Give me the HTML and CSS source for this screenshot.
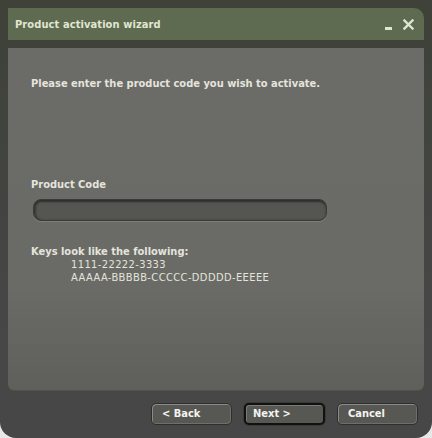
FILE: index.html
```html
<!DOCTYPE html>
<html lang="en">
<head>
    <meta charset="UTF-8">
    <title>Product activation wizard</title>
    <link rel="stylesheet" href="styles.css">
</head>
<body>
    <div class="window">
        <header class="titlebar">
            <h1>Product activation wizard</h1>
            <div class="controls">
                <span class="min"></span>
                <svg class="close" width="11" height="11" viewBox="0 0 11 11">
                    <path d="M1.5 1.5 L9.5 9.5 M9.5 1.5 L1.5 9.5" stroke="#dfe6cf" stroke-width="2.4" stroke-linecap="square"/>
                </svg>
            </div>
        </header>
        <main class="panel">
            <p class="intro">Please enter the product code you wish to activate.</p>
            <label class="lbl" for="code">Product Code</label>
            <input type="text" id="code" class="code">
            <p class="keys">Keys look like the following:</p>
            <p class="sample">1111-22222-3333</p>
            <p class="sample">AAAAA-BBBBB-CCCCC-DDDDD-EEEEE</p>
        </main>
        <footer class="buttons">
            <button class="btn">&lt; Back</button>
            <button class="btn default">Next &gt;</button>
            <button class="btn">Cancel</button>
        </footer>
    </div>
</body>
</html>
```

FILE: styles.css
```css
*{
    margin:0;
    box-sizing: border-box;
}
body{
    margin:0;
    background:#e8e8e8;
    width:432px;
    height:438px;
    overflow:hidden;
    font-family: "DejaVu Sans", Verdana, sans-serif;
    font-stretch: condensed;
    font-size: 11px;
    color:#e4e4dc;
}
.window{
    width:432px;
    height:438px;
    background: linear-gradient(#3e4238 0, #41433d 120px, #464646 300px, #474747 100%);
    border-radius: 0 0 16px 16px;
    padding:8px 8px 0 8px;
    display:flex;
    flex-direction:column;
}
.titlebar{
    height:32px;
    background:#5f6b50;
    border-radius: 0 10px 0 0;
    display:flex;
    align-items:center;
    justify-content:space-between;
    padding: 0 10px 0 7px;
}
h1{
    font-size:11px;
    font-weight:bold;
    color:#e0e6d2;
    letter-spacing:0.1px;
    margin-top:1px;
}
.controls{
    display:flex;
    align-items:center;
    gap:11px;
    margin-top:0;
}
.min{
    width:7px;
    height:3px;
    background:#dfe6cf;
    margin-top:9px;
}
.panel{
    margin-top:8px;
    height:342px;
    background: linear-gradient(#6b6c68 0, #6a6b67 240px, #5f605c 100%);
    border-radius: 0 0 6px 6px;
    box-shadow: 0 1px 0 #50504c;
    padding: 29px 23px 0 23px;
    display:flex;
    flex-direction:column;
    align-items:flex-start;
    font-weight:bold;
}
.intro{
    line-height:13px;
}
.lbl{
    margin-top:88px;
    line-height:13px;
}
.code{
    margin-top:8px;
    margin-left:2px;
    width:294px;
    height:22px;
    border-radius:8px;
    background:#555652;
    border:1px solid #3a3b38;
    box-shadow: inset 0 2px 2px #2e2f2c, inset 2px 0 2px #3a3b37, 0 1px 0 #7d7e7a;
    outline:none;
}
.keys{
    margin-top:24px;
    line-height:13px;
}
.sample{
    font-weight:normal;
    margin-left:40px;
    line-height:13px;
    letter-spacing:0.4px;
}
.buttons{
    display:flex;
    justify-content:flex-end;
    gap:12px;
    padding: 13px 6px 0 0;
}
.btn{
    width:81px;
    height:22px;
    background:#575854;
    color:#f4f4f0;
    border:1px solid #2e2f2c;
    border-radius:5px;
    box-shadow: inset 1px 1px 0 #8a8b86, inset -1px -1px 0 #6e6f6a;
    font-family: inherit;
    font-stretch: condensed;
    font-weight:bold;
    font-size:11px;
    text-align:left;
    padding: 0 0 1px 10px;
}
.default{
    border:2px solid #111210;
    box-shadow: inset 1px 1px 0 #7a7b76, 0 0 0 1px #3a3b37;
    padding-left:7px;
}
```
